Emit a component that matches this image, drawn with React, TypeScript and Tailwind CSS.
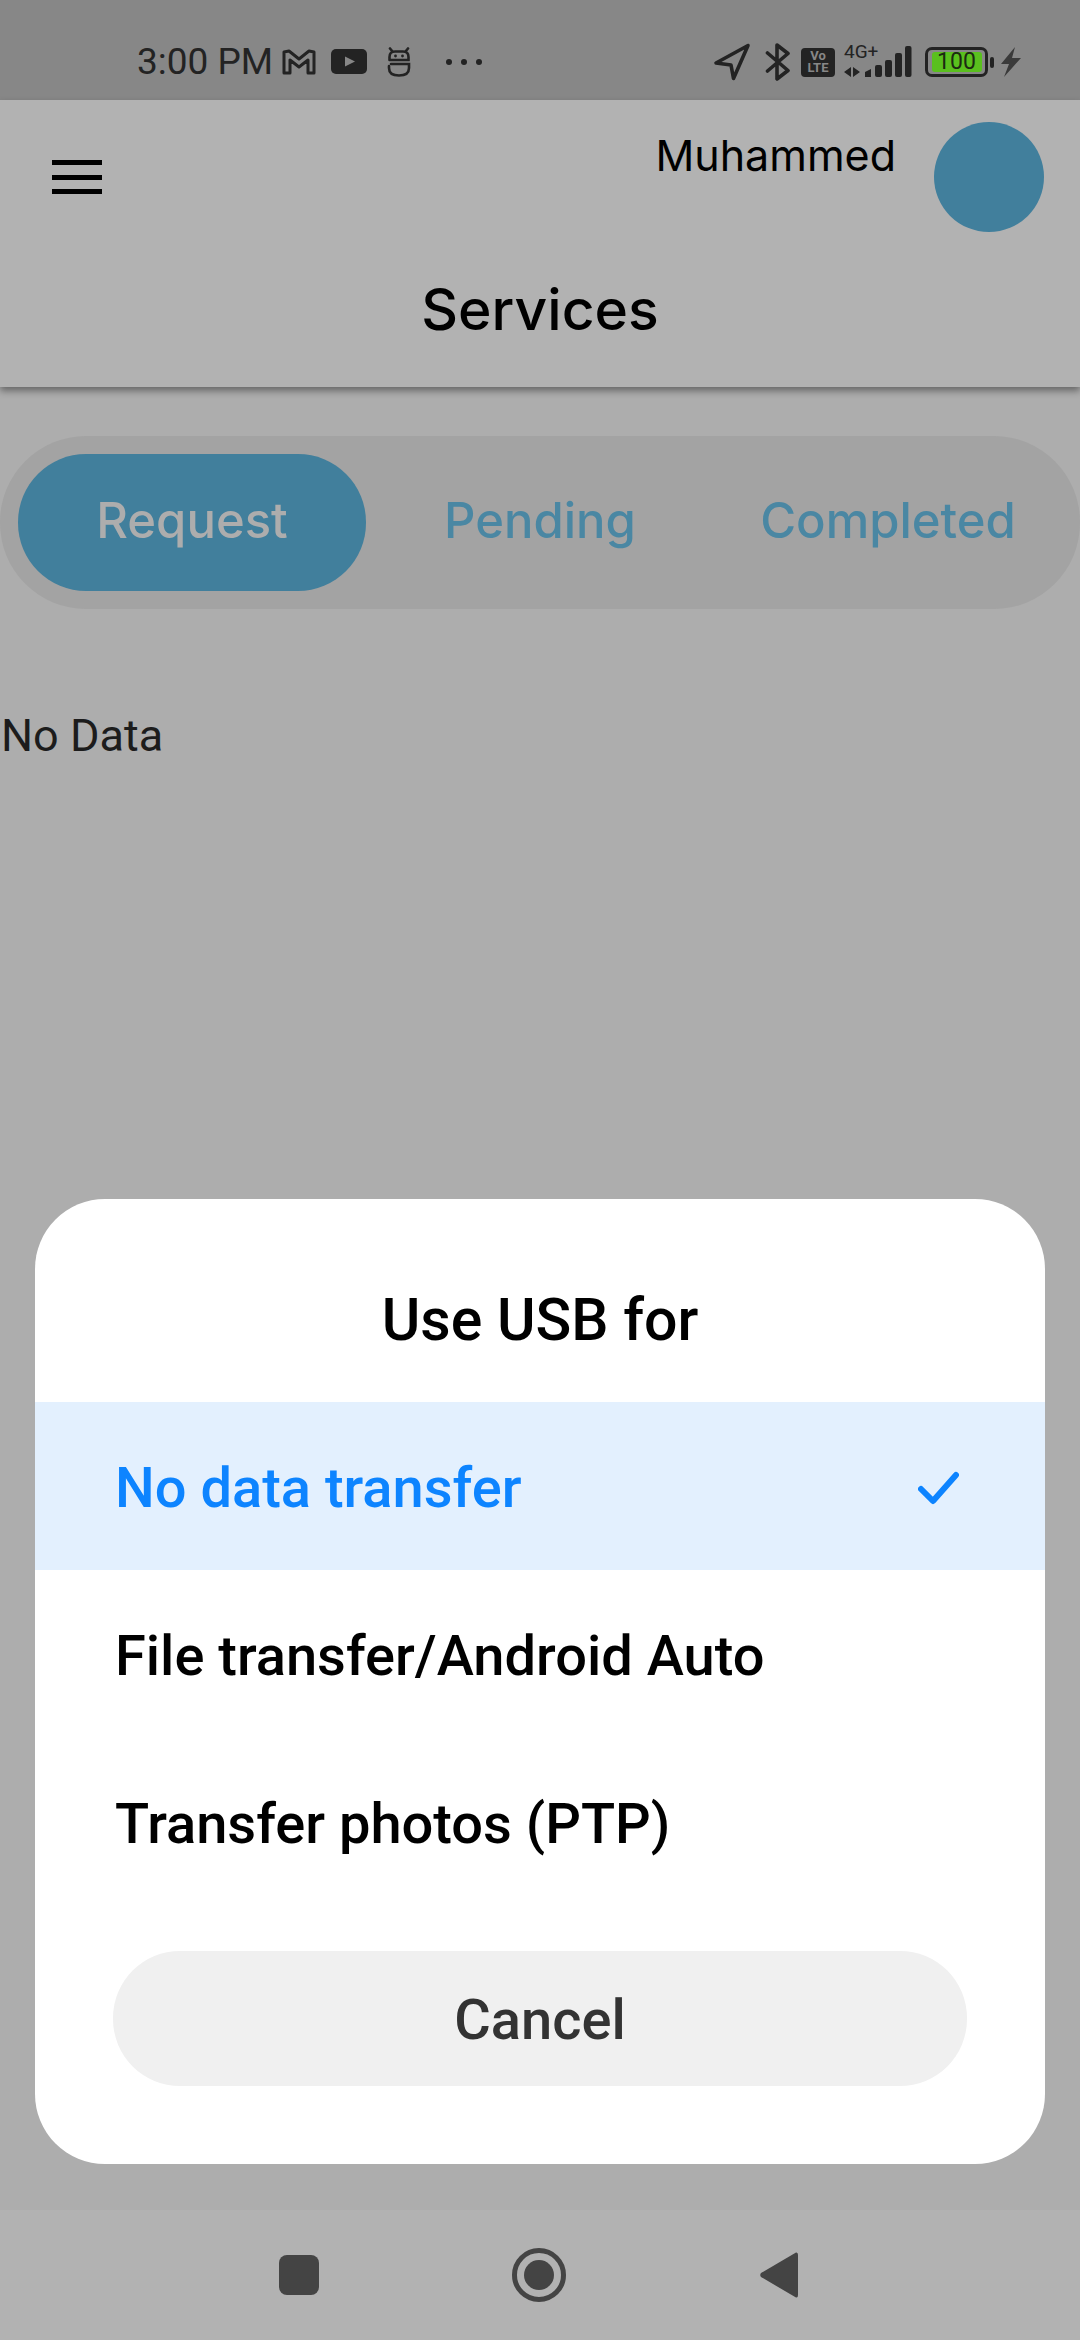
const roboto = "font-['Roboto',sans-serif]"
const heading = "font-['Inter',sans-serif]"

const tabs = ["Request", "Pending", "Completed"]
const options = ["No data transfer", "File transfer/Android Auto", "Transfer photos (PTP)"]

function GmailIcon() {
  return (
    <svg width="34" height="26" viewBox="0 0 34 26" fill="none" stroke="#232323" strokeWidth="3" strokeLinejoin="round">
      <path d="M2 3 L7 2 L17 10 L27 2 L32 3 V24 H26 V11 L17 18 L8 11 V24 H2 Z" />
    </svg>
  )
}

function YoutubeIcon() {
  return (
    <svg width="36" height="26" viewBox="0 0 36 26">
      <rect x="0" y="0" width="36" height="25" rx="5" fill="#232323" />
      <path d="M14 7.5 L24 12.5 L14 17.5 Z" fill="#878787" />
    </svg>
  )
}

function RobotIcon() {
  return (
    <svg width="24" height="30" viewBox="0 0 24 30" fill="none" stroke="#232323" strokeWidth="2.6" strokeLinecap="round">
      <path d="M3 1.5 L5.5 4.5 M21 1.5 L18.5 4.5" />
      <path d="M2.5 13 V10 Q2.5 4.5 8 4.5 H16 Q21.5 4.5 21.5 10 V13 H2.5" />
      <path d="M2 19 V21 Q2 28.5 12 28.5 Q22 28.5 22 21 V17 H4" />
      <circle cx="8.5" cy="9" r="1.4" fill="#232323" stroke="none" />
      <circle cx="15.5" cy="9" r="1.4" fill="#232323" stroke="none" />
    </svg>
  )
}

function LocationIcon() {
  return (
    <svg width="38" height="38" viewBox="0 0 38 38" fill="none" stroke="#232323" strokeWidth="3.6" strokeLinejoin="round">
      <path d="M35 2.5 L3 20 L18 22 L20.5 35.5 Z" />
    </svg>
  )
}

function BluetoothIcon() {
  return (
    <svg width="26" height="38" viewBox="0 0 26 38" fill="none" stroke="#232323" strokeWidth="3.6" strokeLinecap="round" strokeLinejoin="round">
      <path d="M2.5 10 L23 27.5 L12 36 V2 L23 10.5 L2.5 28" />
    </svg>
  )
}

function SignalIcon() {
  return (
    <svg width="68" height="32" viewBox="0 0 68 32" fill="#232323">
      <path d="M0 26 L7 21 V31 Z M9 21 L16 26 L9 31 Z" />
      <path d="M21 26 L27 23 V31 H21 Z" />
      <rect x="31" y="19" width="7" height="12" rx="2" />
      <rect x="41" y="14" width="7" height="17" rx="2" />
      <rect x="51" y="7" width="7" height="24" rx="2" />
      <rect x="61" y="0" width="6.5" height="31" rx="2" />
    </svg>
  )
}

function BoltIcon() {
  return (
    <svg width="20" height="30" viewBox="0 0 20 30" fill="#3a3a3a">
      <path d="M14 0 L0 17 H8 L3 30 L20 11 H11 Z" />
    </svg>
  )
}

function StatusBar() {
  return (
    <div className="flex h-[100px] items-center bg-[#878787] pt-[24px] pl-[137px] text-[#232323]">
      <span className={`${roboto} w-[145px] text-[37px] leading-[40px] whitespace-nowrap`}>3:00 PM</span>
      <GmailIcon />
      <div className="ml-[15px]"><YoutubeIcon /></div>
      <div className="ml-[20px]"><RobotIcon /></div>
      <div className="ml-[35px] flex gap-[9px]">
        <span className="h-[6px] w-[6px] rounded-full bg-[#232323]" />
        <span className="h-[6px] w-[6px] rounded-full bg-[#232323]" />
        <span className="h-[6px] w-[6px] rounded-full bg-[#232323]" />
      </div>
      <div className="ml-[231px]"><LocationIcon /></div>
      <div className="ml-[14px]"><BluetoothIcon /></div>
      <div className={`${roboto} ml-[10px] flex h-[29px] w-[34px] flex-col items-center justify-center rounded-[4px] bg-[#232323] text-[13px] leading-[12px] font-bold text-[#878787]`}>
        <span>Vo</span>
        <span>LTE</span>
      </div>
      <div className="relative ml-[9px] h-[32px] w-[68px]">
        <SignalIcon />
        <span className={`${roboto} absolute -top-[4px] left-0 text-[19px] leading-[19px]`}>4G+</span>
      </div>
      <div className="ml-[13px] flex h-[30px] w-[63px] items-center justify-center rounded-[7px] border-[3px] border-[#232323]">
        <span className={`${roboto} flex h-[20px] w-[50px] items-center justify-center rounded-[3px] bg-[#5ac01e] text-[23px] leading-[20px] text-[#1c2a12]`}>100</span>
      </div>
      <span className="ml-[2px] h-[11px] w-[4px] rounded-[2px] bg-[#232323]" />
      <div className="ml-[7px]"><BoltIcon /></div>
    </div>
  )
}

function Header() {
  return (
    <header className="relative z-10 flex h-[287px] flex-col bg-[#b2b2b2] pt-[22px] shadow-[0_4px_7px_rgba(0,0,0,0.4)]">
      <div className="flex h-[110px] items-start justify-between pr-[36px] pl-[52px]">
        <div className="mt-[38px] flex h-[34px] w-[50px] flex-col justify-between">
          <span className="h-[5px] bg-black" />
          <span className="h-[5px] bg-black" />
          <span className="h-[5px] bg-black" />
        </div>
        <div className="flex items-start gap-[38px]">
          <span className={`${heading} mt-[10px] text-[43px] leading-[46px] font-normal text-black`}>Muhammed</span>
          <div className="h-[110px] w-[110px] rounded-full bg-[#417f9c]" />
        </div>
      </div>
      <h1 className={`${heading} mt-[43px] text-center text-[57px] leading-[70px] font-medium text-black`}>Services</h1>
    </header>
  )
}

function Tabs() {
  return (
    <div className="grid h-[173px] grid-cols-3 rounded-[86px] bg-[#a3a3a3] p-[18px]">
      {tabs.map((tab, i) => (
        <div
          key={tab}
          className={`${heading} flex items-center justify-center rounded-[68px] pb-[4px] text-[49px] font-medium ${
            i === 0 ? "bg-[#417f9c] text-[#adadad]" : "text-[#4a87a3]"
          }`}
        >
          {tab}
        </div>
      ))}
    </div>
  )
}

function UsbDialog() {
  return (
    <div className={`${roboto} absolute top-[1199px] left-[35px] flex h-[965px] w-[1010px] flex-col rounded-[70px] bg-white`}>
      <h2 className="flex h-[203px] items-start justify-center pt-[82px] text-[59px] leading-[78px] font-medium text-black">Use USB for</h2>
      {options.map((option, i) => (
        <div
          key={option}
          className={`flex h-[168px] items-center justify-between pt-[4px] pr-[86px] pl-[80px] text-[56px] font-medium whitespace-nowrap ${
            i === 0 ? "bg-[#e3f0fe] text-[#0d84ff]" : "text-black"
          }`}
        >
          <span>{option}</span>
          {i === 0 && (
            <svg width="41" height="34" viewBox="0 0 41 34" fill="none" stroke="#0d84ff" strokeWidth="6" strokeLinecap="round" strokeLinejoin="round">
              <path d="M3 18 L15 30 L38 4" />
            </svg>
          )}
        </div>
      ))}
      <div className="mx-[78px] mt-[45px] flex h-[135px] items-center justify-center rounded-[67px] bg-[#f0f0f0] pt-[2px] text-[56px] font-medium text-[#333333]">Cancel</div>
    </div>
  )
}

function NavBar() {
  return (
    <div className="flex h-[130px] items-center bg-[#b2b2b2] pl-[279px]">
      <span className="h-[40px] w-[40px] rounded-[8px] bg-[#444444]" />
      <div className="ml-[193px] flex h-[54px] w-[54px] items-center justify-center rounded-full border-[5px] border-[#444444]">
        <span className="h-[30px] w-[30px] rounded-full bg-[#444444]" />
      </div>
      <svg className="ml-[194px]" width="38" height="46" viewBox="0 0 38 46" fill="#444444">
        <path d="M36 0.5 Q38 0 38 3 V43 Q38 46 36 45.5 L1 25 Q-0.5 23 1 21 Z" />
      </svg>
    </div>
  )
}

export default function App() {
  return (
    <div className="relative flex h-[2340px] w-[1080px] flex-col overflow-hidden bg-[#adadad]">
      <StatusBar />
      <Header />
      <main className="flex-1 pt-[49px]">
        <Tabs />
        <p className={`${roboto} mt-[102px] pl-[1px] text-[45px] leading-[50px] text-[#1c1c1c]`}>No Data</p>
      </main>
      <NavBar />
      <UsbDialog />
    </div>
  )
}
